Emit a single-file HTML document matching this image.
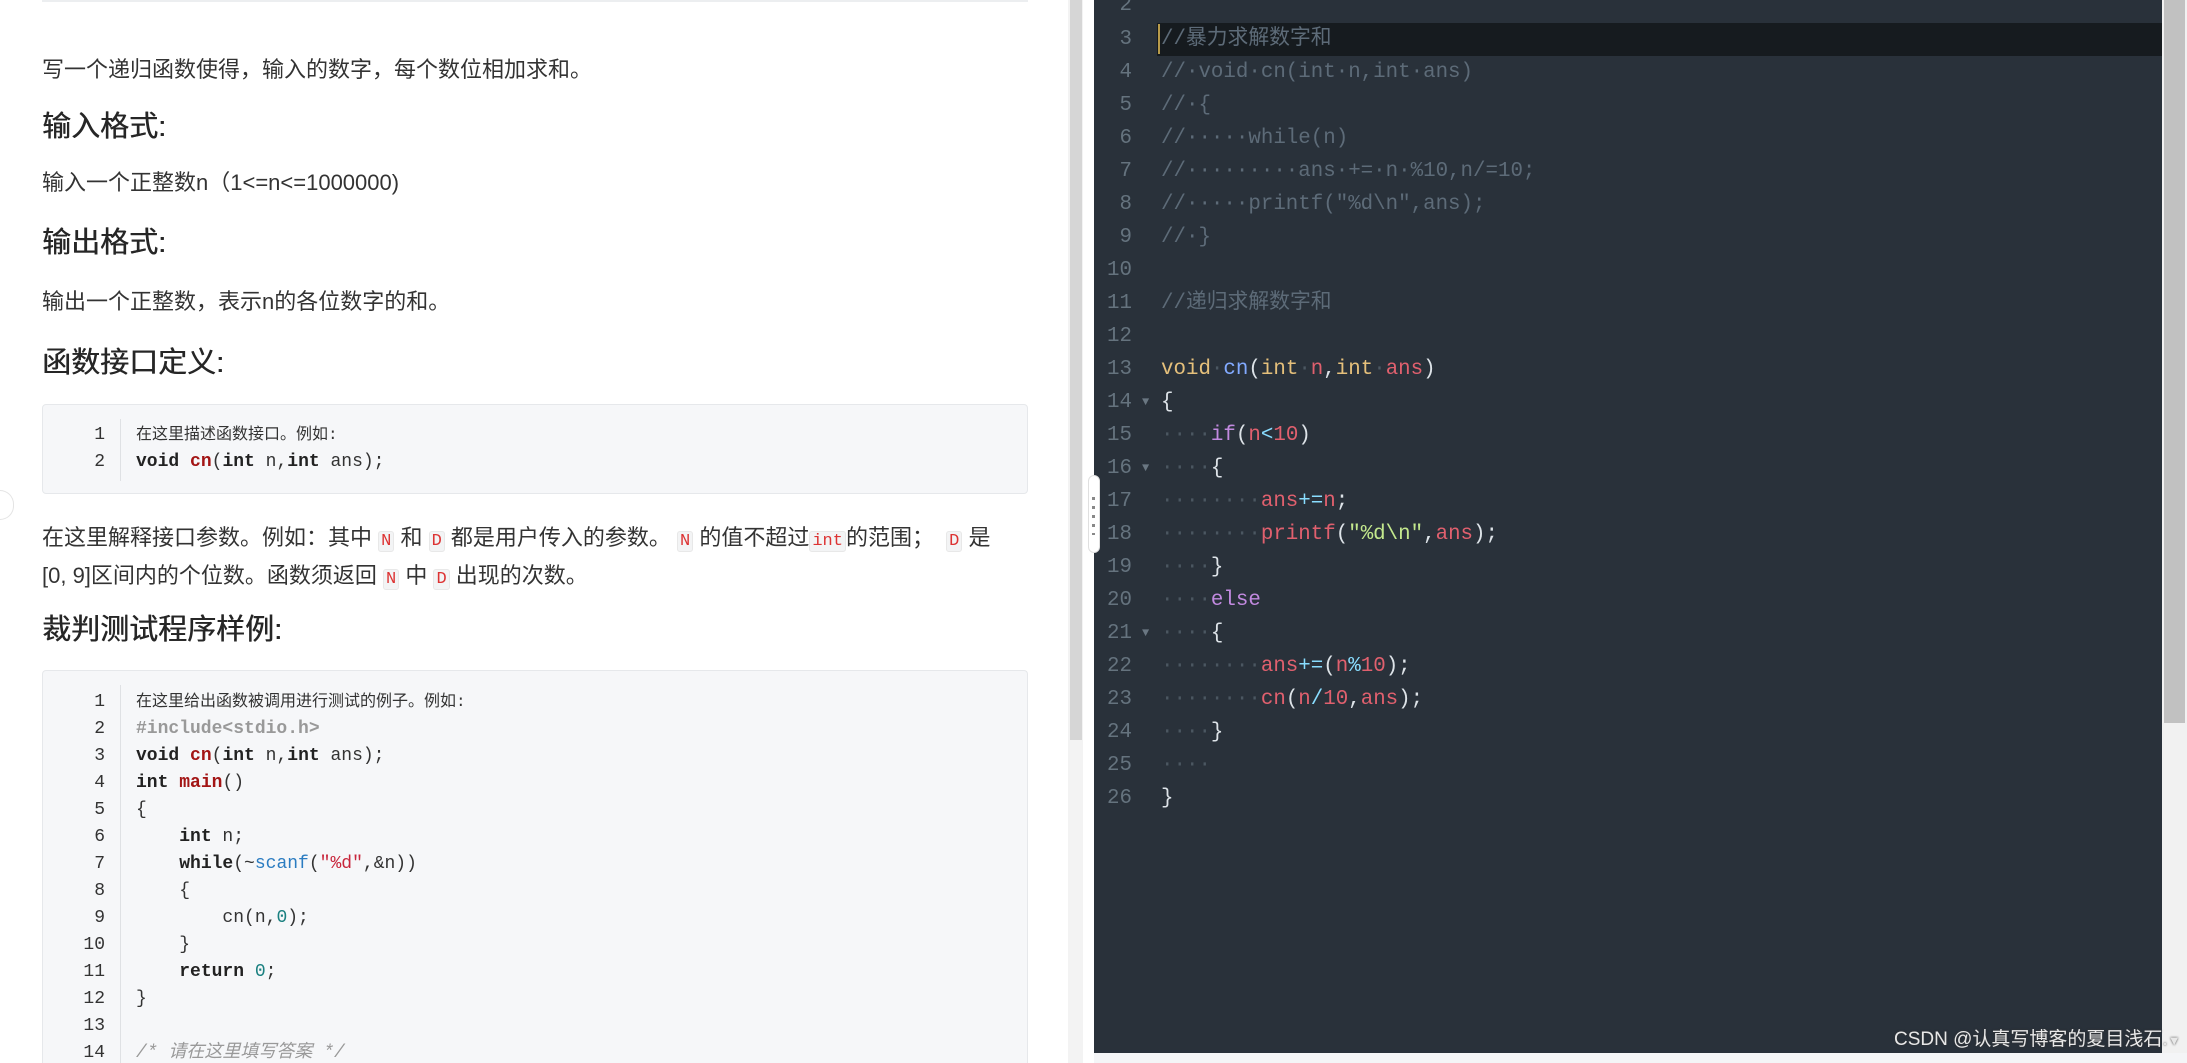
<!DOCTYPE html>
<html><head><meta charset="utf-8"><style>
*{margin:0;padding:0;box-sizing:border-box}
html,body{width:2187px;height:1063px;overflow:hidden}
body{position:relative;background:#fff;font-family:"Liberation Sans","Noto Sans CJK SC",sans-serif;color:#333}
.a{position:absolute;white-space:pre}
.t{font-size:22px;line-height:30px;color:#333}
.h{font-size:29px;line-height:40px;color:#262626;font-weight:normal;text-shadow:0.5px 0 0 #262626}
.box{position:absolute;left:42px;width:986px;background:#f6f7f9;border:1px solid #e6e8eb;border-radius:4px;overflow:hidden}
.cl{font-family:"Liberation Mono","Noto Sans CJK SC",monospace;font-size:18px;line-height:27px;color:#333}
.ln{position:absolute;width:62px;text-align:right;font-family:"Liberation Mono",monospace;font-size:18px;line-height:27px;color:#333}
.k{font-weight:bold;color:#222}.f{color:#a31515}.s{color:#c8263c}.nm{color:#1a8080}.bl{color:#2b7cc1}.gr{color:#999;font-weight:bold}.cm{color:#999;font-style:italic}
.chip{font-family:"Liberation Mono",monospace;font-size:17px;color:#d33;background:#f3f4f5;border:1px solid #e8e8e8;border-radius:3px;padding:0 2px}
#ed{position:absolute;left:1094px;top:0;width:1068px;height:1053px;background:#29313a;overflow:hidden}
.el{position:absolute;left:0;width:1068px;height:33px;line-height:33px;font-family:"Liberation Mono","Noto Sans CJK SC",monospace;font-size:20.8px;white-space:pre}
.g{position:absolute;left:0;width:38px;text-align:right;color:#65737e}
.c{position:absolute;left:67px;color:#dde3e8}
.cmt{color:#5d6b78}.d{color:#4b5761}.y{color:#e5c07b}.b{color:#82aaff}.r{color:#e0606e}.p{color:#c28ae0}.gn{color:#c3e88d}.o{color:#89ddff}
.fold{position:absolute;left:48px;color:#6a7782;font-size:12px}
</style></head><body>
<div class="a" style="left:42px;top:0;width:986px;height:2px;background:#eceef0"></div>
<div class="a t" style="left:42px;top:55px">写一个递归函数使得，输入的数字，每个数位相加求和。</div>
<div class="a h" style="left:42px;top:107px">输入格式:</div>
<div class="a t" style="left:42px;top:168px">输入一个正整数n（1&lt;=n&lt;=1000000)</div>
<div class="a h" style="left:42px;top:223px">输出格式:</div>
<div class="a t" style="left:42px;top:287px">输出一个正整数，表示n的各位数字的和。</div>
<div class="a h" style="left:42px;top:343px">函数接口定义:</div>
<div class="box" style="top:404px;height:90px">
<div style="position:absolute;left:77px;top:14px;width:1px;height:62px;background:#dfe1e4"></div>
<div class="ln" style="left:0;top:17px">1<br>2</div>
<div class="a cl" style="left:93px;top:17px"><span style="font-size:16px">在这里描述函数接口。例如:</span>
<span class="k">void</span> <span class="f k">cn</span>(<span class="k">int</span> n,<span class="k">int</span> ans);</div>
</div>
<div class="a t" style="left:0;top:490px;width:14px;height:30px;border:1px solid #e4e4e4;border-left:none;border-radius:0 15px 15px 0;background:#fff"></div>
<div class="a t" style="left:42px;top:521px;line-height:34px">在这里解释接口参数。例如：其中 <span class="chip">N</span> 和 <span class="chip">D</span> 都是用户传入的参数。 <span class="chip">N</span> 的值不超过<span class="chip">int</span>的范围；  <span class="chip">D</span> 是
[0, 9]区间内的个位数。函数须返回 <span class="chip">N</span> 中 <span class="chip">D</span> 出现的次数。</div>
<div class="a h" style="left:42px;top:610px">裁判测试程序样例:</div>
<div class="box" style="top:670px;height:393px;border-bottom:none;border-radius:4px 4px 0 0">
<div style="position:absolute;left:77px;top:14px;width:1px;height:400px;background:#dfe1e4"></div>
<div class="ln" style="left:0;top:18px">1<br>2<br>3<br>4<br>5<br>6<br>7<br>8<br>9<br>10<br>11<br>12<br>13<br>14</div>
<div class="a cl" style="left:93px;top:18px"><span style="font-size:16px">在这里给出函数被调用进行测试的例子。例如:</span>
<span class="gr">#include&lt;stdio.h&gt;</span>
<span class="k">void</span> <span class="f k">cn</span>(<span class="k">int</span> n,<span class="k">int</span> ans);
<span class="k">int</span> <span class="f k">main</span>()
{
    <span class="k">int</span> n;
    <span class="k">while</span>(~<span class="bl">scanf</span>(<span class="s">"%d"</span>,&amp;n))
    {
        cn(n,<span class="nm">0</span>);
    }
    <span class="k">return</span> <span class="nm">0</span>;
}

<span class="cm">/* 请在这里填写答案 */</span></div>
</div>
<div class="a" style="left:1068px;top:0;width:15px;height:1063px;background:#f3f3f3"></div>
<div class="a" style="left:1070px;top:0;width:12px;height:740px;background:#d6d6d6"></div>

<div id="ed">
<div class="el" style="top:23px;left:63px;width:1005px;background:#161b1f"></div>
<div class="a" style="left:64px;top:24px;width:2px;height:30px;background:#b89b4a"></div>
<div class="el" style="top:-11px"><span class="g">2</span></div>
<div class="el" style="top:23px"><span class="g">3</span><span class="c cmt">//暴力求解数字和</span></div>
<div class="el" style="top:56px"><span class="g">4</span><span class="c cmt">//·void·cn(int·n,int·ans)</span></div>
<div class="el" style="top:89px"><span class="g">5</span><span class="c cmt">//·{</span></div>
<div class="el" style="top:122px"><span class="g">6</span><span class="c cmt">//·····while(n)</span></div>
<div class="el" style="top:155px"><span class="g">7</span><span class="c cmt">//·········ans·+=·n·%10,n/=10;</span></div>
<div class="el" style="top:188px"><span class="g">8</span><span class="c cmt">//·····printf("%d\n",ans);</span></div>
<div class="el" style="top:221px"><span class="g">9</span><span class="c cmt">//·}</span></div>
<div class="el" style="top:254px"><span class="g">10</span></div>
<div class="el" style="top:287px"><span class="g">11</span><span class="c cmt">//递归求解数字和</span></div>
<div class="el" style="top:320px"><span class="g">12</span></div>
<div class="el" style="top:353px"><span class="g">13</span><span class="c"><span class="y">void</span><span class="d">·</span><span class="b">cn</span>(<span class="y">int</span><span class="d">·</span><span class="r">n</span>,<span class="y">int</span><span class="d">·</span><span class="r">ans</span>)</span></div>
<div class="el" style="top:386px"><span class="g">14</span><span class="fold">▼</span><span class="c">{</span></div>
<div class="el" style="top:419px"><span class="g">15</span><span class="c"><span class="d">····</span><span class="p">if</span>(<span class="r">n</span><span class="o">&lt;</span><span class="r">10</span>)</span></div>
<div class="el" style="top:452px"><span class="g">16</span><span class="fold">▼</span><span class="c"><span class="d">····</span>{</span></div>
<div class="el" style="top:485px"><span class="g">17</span><span class="c"><span class="d">········</span><span class="r">ans</span><span class="o">+=</span><span class="r">n</span>;</span></div>
<div class="el" style="top:518px"><span class="g">18</span><span class="c"><span class="d">········</span><span class="r">printf</span>(<span class="gn">"%d\n"</span>,<span class="r">ans</span>);</span></div>
<div class="el" style="top:551px"><span class="g">19</span><span class="c"><span class="d">····</span>}</span></div>
<div class="el" style="top:584px"><span class="g">20</span><span class="c"><span class="d">····</span><span class="p">else</span></span></div>
<div class="el" style="top:617px"><span class="g">21</span><span class="fold">▼</span><span class="c"><span class="d">····</span>{</span></div>
<div class="el" style="top:650px"><span class="g">22</span><span class="c"><span class="d">········</span><span class="r">ans</span><span class="o">+=</span>(<span class="r">n</span><span class="o">%</span><span class="r">10</span>);</span></div>
<div class="el" style="top:683px"><span class="g">23</span><span class="c"><span class="d">········</span><span class="r">cn</span>(<span class="r">n</span><span class="o">/</span><span class="r">10</span>,<span class="r">ans</span>);</span></div>
<div class="el" style="top:716px"><span class="g">24</span><span class="c"><span class="d">····</span>}</span></div>
<div class="el" style="top:749px"><span class="g">25</span><span class="c"><span class="d">····</span></span></div>
<div class="el" style="top:782px"><span class="g">26</span><span class="c">}</span></div>
</div>
<div class="a" style="left:1088px;top:475px;width:12px;height:78px;background:#fff;border-radius:6px;border:1px solid #e0e0e0"></div>
<div class="a" style="left:1092px;top:497px;width:3px;height:38px;background:repeating-linear-gradient(#888 0 3px,transparent 3px 9px)"></div>
<div class="a" style="left:2162px;top:0;width:25px;height:1063px;background:#f1f1f1"></div>
<div class="a" style="left:2164px;top:0;width:21px;height:723px;background:#c1c1c1"></div>
<div class="a" style="left:1094px;top:1053px;width:1093px;height:10px;background:#f4f5f7"></div>
<div class="a" style="left:1894px;top:1028px;font-size:19px;line-height:24px;color:#e8e8e8;text-shadow:0 0 2px #333">CSDN @认真写博客的夏目浅石.<span style="font-size:13px">▼</span></div>
</body></html>
